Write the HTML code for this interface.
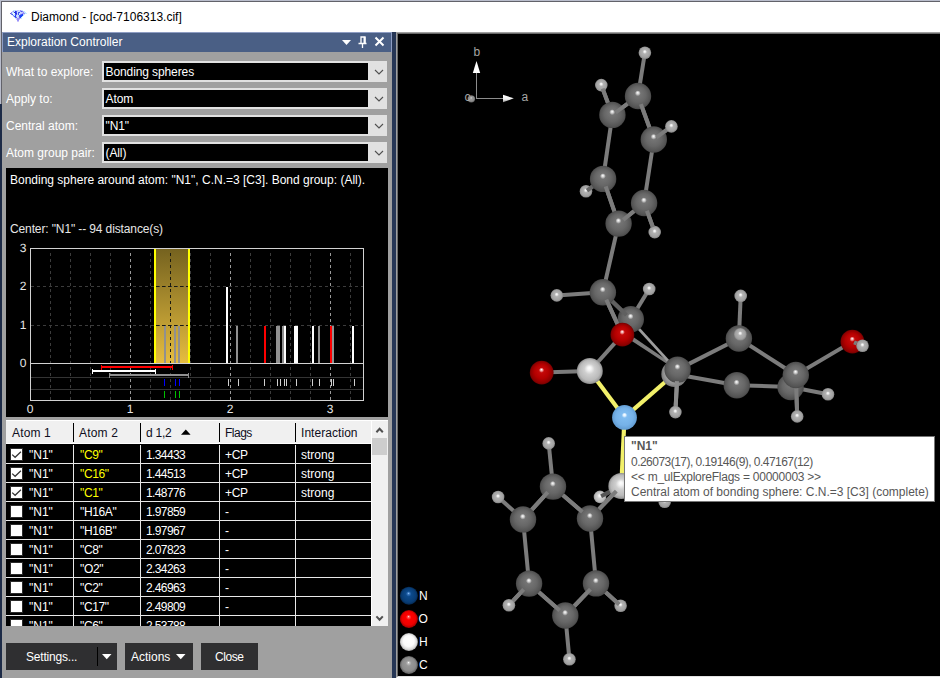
<!DOCTYPE html>
<html lang="en"><head><meta charset="utf-8"><title>Diamond - [cod-7106313.cif]</title>
<style>
*{box-sizing:border-box}
html,body{margin:0;padding:0}
body{width:940px;height:678px;position:relative;overflow:hidden;background:#fff;font-family:"Liberation Sans",sans-serif;font-size:12px;line-height:14px;color:#fff}
.a{position:absolute}
.t{position:absolute;white-space:pre;line-height:14px;height:14px}
.lbl{color:#fff}
.combo{position:absolute;left:102px;width:285px;height:21px;background:#e1e1e1}
.combo .in{position:absolute;left:2px;top:2px;width:264px;height:17px;background:#000}
.combo .tx{position:absolute;left:3.5px;top:4px;white-space:pre;color:#fff}
.combo svg{position:absolute;left:272px;top:8px}
.btn{position:absolute;top:643px;height:27px;background:#2f2f31;color:#fff}
.hd{position:absolute;top:426px;color:#0e0e20;white-space:pre}
.sep{position:absolute;top:423px;width:1px;height:19px;background:#000}
.row{position:absolute;left:6px;width:365px;height:19px}
.row span{position:absolute;top:3px;white-space:pre;color:#fff}
.row .y{color:#ffff00}
.cb{position:absolute;left:4px;top:3px;width:13px;height:13px;background:#fff;border:1px solid #2b2b2b}
.tip{position:absolute;left:624px;top:436px;width:311px;height:66px;background:#fff;border:1px solid #767676;color:#575757}
.tip div{position:absolute;left:6px;white-space:pre;line-height:14px}
</style></head>
<body>
<div class="a" style="left:0;top:0;width:940px;height:1px;background:#b9bdcc"></div>
<div class="a" style="left:1px;top:1px;width:939px;height:1px;background:#62626a"></div>
<div class="a" style="left:0;top:0;width:1px;height:104px;background:#b9bdcc"></div>
<div class="a" style="left:1px;top:1px;width:1px;height:103px;background:#62626a"></div>
<div class="a" style="left:0;top:104px;width:2px;height:574px;background:#1d2b47"></div>
<svg class="a" style="left:10px;top:10px" width="17" height="12" viewBox="0 0 17 12" shape-rendering="crispEdges"><rect x="3" y="0" width="2" height="1" fill="#c4ecff"/><rect x="5" y="0" width="1" height="1" fill="#cbc4ff"/><rect x="6" y="0" width="1" height="1" fill="#c4ecff"/><rect x="7" y="0" width="2" height="1" fill="#cbc4ff"/><rect x="9" y="0" width="1" height="1" fill="#c4ecff"/><rect x="10" y="0" width="1" height="1" fill="#9890f8"/><rect x="11" y="0" width="1" height="1" fill="#cbc4ff"/><rect x="12" y="0" width="1" height="1" fill="#c4ecff"/><rect x="2" y="1" width="1" height="1" fill="#cbc4ff"/><rect x="3" y="1" width="1" height="1" fill="#9890f8"/><rect x="4" y="1" width="1" height="1" fill="#c4ecff"/><rect x="5" y="1" width="1" height="1" fill="#2430e0"/><rect x="6" y="1" width="1" height="1" fill="#4858f0"/><rect x="7" y="1" width="1" height="1" fill="#cbc4ff"/><rect x="8" y="1" width="1" height="1" fill="#c4ecff"/><rect x="9" y="1" width="1" height="1" fill="#cbc4ff"/><rect x="10" y="1" width="1" height="1" fill="#9890f8"/><rect x="11" y="1" width="1" height="1" fill="#4858f0"/><rect x="12" y="1" width="1" height="1" fill="#7888f0"/><rect x="13" y="1" width="1" height="1" fill="#cbc4ff"/><rect x="14" y="1" width="1" height="1" fill="#c4ecff"/><rect x="1" y="2" width="1" height="1" fill="#9890f8"/><rect x="2" y="2" width="2" height="1" fill="#c4ecff"/><rect x="4" y="2" width="2" height="1" fill="#2430e0"/><rect x="6" y="2" width="1" height="1" fill="#4858f0"/><rect x="7" y="2" width="1" height="1" fill="#c4ecff"/><rect x="8" y="2" width="2" height="1" fill="#4858f0"/><rect x="10" y="2" width="1" height="1" fill="#c4ecff"/><rect x="11" y="2" width="2" height="1" fill="#cbc4ff"/><rect x="13" y="2" width="1" height="1" fill="#9890f8"/><rect x="14" y="2" width="2" height="1" fill="#c4ecff"/><rect x="0" y="3" width="1" height="1" fill="#7464d4"/><rect x="1" y="3" width="1" height="1" fill="#7888f0"/><rect x="2" y="3" width="1" height="1" fill="#c4ecff"/><rect x="3" y="3" width="2" height="1" fill="#f4fbff"/><rect x="5" y="3" width="2" height="1" fill="#2430e0"/><rect x="7" y="3" width="1" height="1" fill="#cbc4ff"/><rect x="8" y="3" width="1" height="1" fill="#4858f0"/><rect x="9" y="3" width="1" height="1" fill="#c4ecff"/><rect x="10" y="3" width="2" height="1" fill="#cbc4ff"/><rect x="12" y="3" width="3" height="1" fill="#9890f8"/><rect x="15" y="3" width="2" height="1" fill="#c4ecff"/><rect x="1" y="4" width="1" height="1" fill="#7888f0"/><rect x="2" y="4" width="1" height="1" fill="#4858f0"/><rect x="3" y="4" width="1" height="1" fill="#f4fbff"/><rect x="4" y="4" width="1" height="1" fill="#c4ecff"/><rect x="5" y="4" width="2" height="1" fill="#4858f0"/><rect x="7" y="4" width="1" height="1" fill="#cbc4ff"/><rect x="8" y="4" width="1" height="1" fill="#4858f0"/><rect x="9" y="4" width="1" height="1" fill="#c4ecff"/><rect x="10" y="4" width="1" height="1" fill="#7888f0"/><rect x="11" y="4" width="1" height="1" fill="#4858f0"/><rect x="12" y="4" width="1" height="1" fill="#1c44f8"/><rect x="13" y="4" width="1" height="1" fill="#cbc4ff"/><rect x="14" y="4" width="1" height="1" fill="#c4ecff"/><rect x="2" y="5" width="1" height="1" fill="#c4ecff"/><rect x="3" y="5" width="1" height="1" fill="#7888f0"/><rect x="4" y="5" width="1" height="1" fill="#c4ecff"/><rect x="5" y="5" width="1" height="1" fill="#1c44f8"/><rect x="6" y="5" width="1" height="1" fill="#cbc4ff"/><rect x="7" y="5" width="2" height="1" fill="#c4ecff"/><rect x="9" y="5" width="1" height="1" fill="#4858f0"/><rect x="10" y="5" width="3" height="1" fill="#1c44f8"/><rect x="13" y="5" width="1" height="1" fill="#c4ecff"/><rect x="3" y="6" width="1" height="1" fill="#cbc4ff"/><rect x="4" y="6" width="1" height="1" fill="#4858f0"/><rect x="5" y="6" width="1" height="1" fill="#1c44f8"/><rect x="6" y="6" width="1" height="1" fill="#cbc4ff"/><rect x="7" y="6" width="1" height="1" fill="#c4ecff"/><rect x="8" y="6" width="1" height="1" fill="#cbc4ff"/><rect x="9" y="6" width="1" height="1" fill="#4858f0"/><rect x="10" y="6" width="2" height="1" fill="#1c44f8"/><rect x="12" y="6" width="1" height="1" fill="#c4ecff"/><rect x="4" y="7" width="1" height="1" fill="#c4ecff"/><rect x="5" y="7" width="1" height="1" fill="#4858f0"/><rect x="6" y="7" width="1" height="1" fill="#7464d4"/><rect x="7" y="7" width="1" height="1" fill="#c4ecff"/><rect x="8" y="7" width="1" height="1" fill="#cbc4ff"/><rect x="9" y="7" width="1" height="1" fill="#7464d4"/><rect x="10" y="7" width="1" height="1" fill="#1c44f8"/><rect x="11" y="7" width="1" height="1" fill="#c4ecff"/><rect x="5" y="8" width="1" height="1" fill="#c4ecff"/><rect x="6" y="8" width="1" height="1" fill="#cbc4ff"/><rect x="7" y="8" width="3" height="1" fill="#9890f8"/><rect x="10" y="8" width="1" height="1" fill="#cbc4ff"/><rect x="11" y="8" width="1" height="1" fill="#c4ecff"/><rect x="6" y="9" width="1" height="1" fill="#cbc4ff"/><rect x="7" y="9" width="2" height="1" fill="#9890f8"/><rect x="9" y="9" width="1" height="1" fill="#cbc4ff"/><rect x="7" y="10" width="2" height="1" fill="#9890f8"/><rect x="7" y="11" width="2" height="1" fill="#cbc4ff"/></svg>
<div class="t" style="left:31px;top:10px;color:#000">Diamond - [cod-7106313.cif]</div>
<div class="a" style="left:2px;top:52px;width:390px;height:626px;background:#a0a0a0"></div>
<div class="a" style="left:2px;top:32px;width:390px;height:20px;background:#4a5f85;border-top:1px solid #8e9dc3;border-left:1px solid #8e9dc3;border-right:1px solid #8e9dc3"></div>
<div class="t" style="left:7px;top:35px">Exploration Controller</div>
<svg class="a" style="left:340px;top:34px" width="50" height="16" viewBox="0 0 50 16">
<polygon points="2,6 11,6 6.5,11" fill="#fff"/>
<path d="M21 9.5V3h4v6.5 M18.5 9.5h8 M22.5 10v4" fill="none" stroke="#fff" stroke-width="1.3"/><path d="M24.5 3v6.5" stroke="#fff" stroke-width="2" fill="none"/>
<path d="M35.5 3.5l8 8 M43.5 3.5l-8 8" stroke="#fff" stroke-width="2" fill="none"/>
</svg>
<div class="a" style="left:392px;top:32px;width:4px;height:646px;background:#263655"></div>
<div class="a" style="left:396px;top:32px;width:544px;height:646px;background:#000;border-left:1px solid #a0a0a0;border-top:1px solid #a0a0a0;border-bottom:1px solid #fff"></div>
<div class="a" style="left:397px;top:33px;width:543px;height:644px;border-left:1px solid #696969;border-top:1px solid #696969;border-bottom:1px solid #e3e3e3"></div>
<div class="t lbl" style="left:6px;top:65px">What to explore:</div>
<div class="combo" style="top:61px"><div class="in"></div><div class="tx" style="letter-spacing:-0.1px">Bonding spheres</div><svg width="10" height="6" viewBox="0 0 10 6"><path d="M1 1l4 4 4-4" fill="none" stroke="#505050" stroke-width="1.1"/></svg></div>
<div class="t lbl" style="left:6px;top:92px">Apply to:</div>
<div class="combo" style="top:88px"><div class="in"></div><div class="tx" style="letter-spacing:-0.1px">Atom</div><svg width="10" height="6" viewBox="0 0 10 6"><path d="M1 1l4 4 4-4" fill="none" stroke="#505050" stroke-width="1.1"/></svg></div>
<div class="t lbl" style="left:6px;top:119px">Central atom:</div>
<div class="combo" style="top:115px"><div class="in"></div><div class="tx" style="letter-spacing:-0.1px">"N1"</div><svg width="10" height="6" viewBox="0 0 10 6"><path d="M1 1l4 4 4-4" fill="none" stroke="#505050" stroke-width="1.1"/></svg></div>
<div class="t lbl" style="left:6px;top:146px">Atom group pair:</div>
<div class="combo" style="top:142px"><div class="in"></div><div class="tx" style="letter-spacing:-0.1px">(All)</div><svg width="10" height="6" viewBox="0 0 10 6"><path d="M1 1l4 4 4-4" fill="none" stroke="#505050" stroke-width="1.1"/></svg></div>
<div class="a" style="left:6px;top:168px;width:382px;height:249px;background:#000"></div>
<div class="t" style="left:10px;top:173px">Bonding sphere around atom: "N1", C.N.=3 [C3]. Bond group: (All).</div>
<div class="t" style="left:10px;top:222px;color:#e6e6e6;letter-spacing:-0.12px">Center: "N1" -- 94 distance(s)</div>
<svg class="a" style="left:6px;top:168px" width="382" height="249" viewBox="6 168 382 249" shape-rendering="crispEdges">
<defs><linearGradient id="gold" x1="0" y1="0" x2="0" y2="1"><stop offset="0" stop-color="#75621f"/><stop offset="1" stop-color="#e6bd3f"/></linearGradient></defs>
<rect x="154" y="249" width="36" height="114" fill="url(#gold)"/>
<line x1="50.5" y1="253" x2="50.5" y2="400" stroke="#3c3c3c" stroke-width="1" stroke-dasharray="3 3"/>
<line x1="70.5" y1="253" x2="70.5" y2="400" stroke="#3c3c3c" stroke-width="1" stroke-dasharray="3 3"/>
<line x1="90.5" y1="253" x2="90.5" y2="400" stroke="#3c3c3c" stroke-width="1" stroke-dasharray="3 3"/>
<line x1="110.5" y1="253" x2="110.5" y2="400" stroke="#3c3c3c" stroke-width="1" stroke-dasharray="3 3"/>
<line x1="130.5" y1="253" x2="130.5" y2="400" stroke="#9a9a9a" stroke-width="1" stroke-dasharray="3 3"/>
<line x1="150.5" y1="253" x2="150.5" y2="400" stroke="#3c3c3c" stroke-width="1" stroke-dasharray="3 3"/>
<line x1="170.5" y1="253" x2="170.5" y2="400" stroke="#3c3c3c" stroke-width="1" stroke-dasharray="3 3"/>
<line x1="190.5" y1="253" x2="190.5" y2="400" stroke="#3c3c3c" stroke-width="1" stroke-dasharray="3 3"/>
<line x1="210.5" y1="253" x2="210.5" y2="400" stroke="#3c3c3c" stroke-width="1" stroke-dasharray="3 3"/>
<line x1="230.5" y1="253" x2="230.5" y2="400" stroke="#9a9a9a" stroke-width="1" stroke-dasharray="3 3"/>
<line x1="250.5" y1="253" x2="250.5" y2="400" stroke="#3c3c3c" stroke-width="1" stroke-dasharray="3 3"/>
<line x1="270.5" y1="253" x2="270.5" y2="400" stroke="#3c3c3c" stroke-width="1" stroke-dasharray="3 3"/>
<line x1="290.5" y1="253" x2="290.5" y2="400" stroke="#3c3c3c" stroke-width="1" stroke-dasharray="3 3"/>
<line x1="310.5" y1="253" x2="310.5" y2="400" stroke="#3c3c3c" stroke-width="1" stroke-dasharray="3 3"/>
<line x1="330.5" y1="253" x2="330.5" y2="400" stroke="#9a9a9a" stroke-width="1" stroke-dasharray="3 3"/>
<line x1="350.5" y1="253" x2="350.5" y2="400" stroke="#3c3c3c" stroke-width="1" stroke-dasharray="3 3"/>
<line x1="170.5" y1="253" x2="170.5" y2="363" stroke="#1a1a10" stroke-width="1" stroke-dasharray="3 3"/>
<line x1="31" y1="286.5" x2="363" y2="286.5" stroke="#3c3c3c" stroke-width="1" stroke-dasharray="3 3"/>
<line x1="156" y1="286.5" x2="188" y2="286.5" stroke="#1a1a10" stroke-width="1" stroke-dasharray="3 3"/>
<line x1="31" y1="325.5" x2="363" y2="325.5" stroke="#3c3c3c" stroke-width="1" stroke-dasharray="3 3"/>
<line x1="156" y1="325.5" x2="188" y2="325.5" stroke="#1a1a10" stroke-width="1" stroke-dasharray="3 3"/>
<rect x="154" y="249" width="2" height="114" fill="#ffff00"/><rect x="188" y="249" width="2" height="114" fill="#ffff00"/>
<rect x="164" y="326" width="2" height="37" fill="#909090"/>
<rect x="174" y="326" width="2" height="37" fill="#909090"/>
<rect x="178" y="326" width="2" height="37" fill="#909090"/>
<rect x="226" y="287" width="2" height="76" fill="#fff"/>
<rect x="236" y="326" width="2" height="37" fill="#909090"/>
<rect x="264" y="326" width="2" height="37" fill="#ff0000"/>
<rect x="276" y="326" width="4" height="37" fill="#909090"/>
<rect x="282" y="326" width="2" height="37" fill="#909090"/>
<rect x="284" y="326" width="2" height="37" fill="#fff"/>
<rect x="294" y="326" width="4" height="37" fill="#fff"/>
<rect x="312" y="326" width="2" height="37" fill="#fff"/>
<rect x="318" y="326" width="2" height="37" fill="#909090"/>
<rect x="330" y="326" width="2" height="37" fill="#ff0000"/>
<rect x="332" y="326" width="2" height="37" fill="#909090"/>
<rect x="352" y="326" width="2" height="37" fill="#fff"/>
<rect x="31" y="377" width="332" height="1" fill="#343434"/><rect x="31" y="389" width="332" height="1" fill="#343434"/>
<rect x="30.5" y="248.5" width="333" height="152" fill="none" stroke="#d2d2d2" stroke-width="1"/>
<rect x="30" y="363" width="334" height="1" fill="#d2d2d2"/>
<rect x="101" y="366" width="72" height="2" fill="#ff0000"/><rect x="101" y="365" width="1" height="5" fill="#ff0000"/><rect x="172" y="365" width="1" height="5" fill="#ff0000"/>
<rect x="92" y="370" width="64" height="2" fill="#fff"/><rect x="92" y="369" width="1" height="5" fill="#fff"/><rect x="155" y="369" width="1" height="5" fill="#fff"/>
<rect x="109" y="374" width="80" height="2" fill="#909090"/><rect x="109" y="373" width="1" height="5" fill="#909090"/><rect x="188" y="373" width="1" height="5" fill="#909090"/>
<rect x="164" y="379" width="1" height="7" fill="#0000ff"/>
<rect x="164" y="391" width="1" height="7" fill="#00c000"/>
<rect x="175" y="379" width="1" height="7" fill="#0000ff"/>
<rect x="175" y="391" width="1" height="7" fill="#00c000"/>
<rect x="179" y="379" width="1" height="7" fill="#0000ff"/>
<rect x="179" y="391" width="1" height="7" fill="#00c000"/>
<rect x="228" y="379" width="1" height="7" fill="#d0d0d0"/>
<rect x="238" y="379" width="1" height="7" fill="#d0d0d0"/>
<rect x="264" y="379" width="1" height="7" fill="#d0d0d0"/>
<rect x="277" y="379" width="1" height="7" fill="#d0d0d0"/>
<rect x="280" y="379" width="1" height="7" fill="#d0d0d0"/>
<rect x="284" y="379" width="1" height="7" fill="#d0d0d0"/>
<rect x="286" y="379" width="1" height="7" fill="#d0d0d0"/>
<rect x="296" y="379" width="1" height="7" fill="#d0d0d0"/>
<rect x="312" y="379" width="1" height="7" fill="#d0d0d0"/>
<rect x="319" y="379" width="1" height="7" fill="#d0d0d0"/>
<rect x="331" y="379" width="1" height="7" fill="#d0d0d0"/>
<rect x="333" y="379" width="1" height="7" fill="#d0d0d0"/>
<rect x="354" y="379" width="1" height="7" fill="#d0d0d0"/>
<g fill="#e6e6e6" font-family="Liberation Sans, sans-serif" font-size="12" text-anchor="middle" style="text-rendering:geometricPrecision">
<text x="23" y="251.8">3</text>
<text x="23" y="289.8">2</text>
<text x="23" y="328.8">1</text>
<text x="23" y="366.8">0</text>
<text x="30" y="413">0</text>
<text x="130" y="413">1</text>
<text x="230" y="413">2</text>
<text x="330" y="413">3</text>
</g></svg>
<div class="a" style="left:6px;top:420px;width:382px;height:206px;background:#000"></div>
<div class="a" style="left:6px;top:420px;width:366px;height:24px;background:#f0f0f0;border-top:1px solid #fff;border-right:1px solid #fff;border-bottom:1px solid #fff"></div>
<div class="a" style="left:371px;top:420px;width:17px;height:206px;background:#f0f0f0;border-left:1px solid #fff;border-top:1px solid #fff"></div>
<div class="a" style="left:372px;top:438px;width:15px;height:17px;background:#cdcdcd"></div>
<svg class="a" style="left:375px;top:426px" width="10" height="8" viewBox="0 0 10 8"><path d="M1.4 6.2l3.2-3.4 3.2 3.4" fill="none" stroke="#505050" stroke-width="2"/></svg>
<svg class="a" style="left:375px;top:614px" width="10" height="8" viewBox="0 0 10 8"><path d="M1.4 2.4l3.2 3.4 3.2-3.4" fill="none" stroke="#505050" stroke-width="2"/></svg>
<div class="hd" style="left:12px;letter-spacing:0.15px">Atom 1</div>
<div class="hd" style="left:79px;letter-spacing:0.2px">Atom 2</div>
<div class="hd" style="left:146px;letter-spacing:-0.25px">d 1,2</div>
<div class="hd" style="left:225px;letter-spacing:-0.5px">Flags</div>
<div class="hd" style="left:301px;letter-spacing:0.05px">Interaction</div>
<div class="sep" style="left:73px"></div>
<div class="sep" style="left:140px"></div>
<div class="sep" style="left:219px"></div>
<div class="sep" style="left:295px"></div>
<svg class="a" style="left:181px;top:429px" width="10" height="6" viewBox="0 0 10 6"><polygon points="0,5.8 9.6,5.8 4.8,0.4" fill="#000"/></svg>
<div class="a" style="left:6px;top:445px;width:365px;height:181px;overflow:hidden">
<div class="row" style="left:0;top:0px;border-bottom:1px solid #e8e8e8"><div class="cb"><svg style="position:absolute;left:0;top:0" width="11" height="11" viewBox="0 0 11 11"><path d="M1.2 5.6l2.9 2.7 5.8-5.6" fill="none" stroke="#333" stroke-width="1.2"/></svg></div><span style="left:23px">"N1"</span><span class="y" style="left:74px;letter-spacing:-0.35px">"C9"</span><span style="left:140px;letter-spacing:-0.62px">1.34433</span><span style="left:219px;letter-spacing:-0.3px">+CP</span><span style="left:295px">strong</span></div>
<div class="row" style="left:0;top:19px;border-bottom:1px solid #e8e8e8"><div class="cb"><svg style="position:absolute;left:0;top:0" width="11" height="11" viewBox="0 0 11 11"><path d="M1.2 5.6l2.9 2.7 5.8-5.6" fill="none" stroke="#333" stroke-width="1.2"/></svg></div><span style="left:23px">"N1"</span><span class="y" style="left:74px;letter-spacing:-0.35px">"C16"</span><span style="left:140px;letter-spacing:-0.62px">1.44513</span><span style="left:219px;letter-spacing:-0.3px">+CP</span><span style="left:295px">strong</span></div>
<div class="row" style="left:0;top:38px;border-bottom:1px solid #e8e8e8"><div class="cb"><svg style="position:absolute;left:0;top:0" width="11" height="11" viewBox="0 0 11 11"><path d="M1.2 5.6l2.9 2.7 5.8-5.6" fill="none" stroke="#333" stroke-width="1.2"/></svg></div><span style="left:23px">"N1"</span><span class="y" style="left:74px;letter-spacing:-0.35px">"C1"</span><span style="left:140px;letter-spacing:-0.62px">1.48776</span><span style="left:219px;letter-spacing:-0.3px">+CP</span><span style="left:295px">strong</span></div>
<div class="row" style="left:0;top:57px;border-bottom:1px solid #e8e8e8"><div class="cb"></div><span style="left:23px">"N1"</span><span style="left:74px;letter-spacing:-0.35px">"H16A"</span><span style="left:140px;letter-spacing:-0.62px">1.97859</span><span style="left:219px;letter-spacing:-0.3px">-</span><span style="left:295px"></span></div>
<div class="row" style="left:0;top:76px;border-bottom:1px solid #e8e8e8"><div class="cb"></div><span style="left:23px">"N1"</span><span style="left:74px;letter-spacing:-0.35px">"H16B"</span><span style="left:140px;letter-spacing:-0.62px">1.97967</span><span style="left:219px;letter-spacing:-0.3px">-</span><span style="left:295px"></span></div>
<div class="row" style="left:0;top:95px;border-bottom:1px solid #e8e8e8"><div class="cb"></div><span style="left:23px">"N1"</span><span style="left:74px;letter-spacing:-0.35px">"C8"</span><span style="left:140px;letter-spacing:-0.62px">2.07823</span><span style="left:219px;letter-spacing:-0.3px">-</span><span style="left:295px"></span></div>
<div class="row" style="left:0;top:114px;border-bottom:1px solid #e8e8e8"><div class="cb"></div><span style="left:23px">"N1"</span><span style="left:74px;letter-spacing:-0.35px">"O2"</span><span style="left:140px;letter-spacing:-0.62px">2.34263</span><span style="left:219px;letter-spacing:-0.3px">-</span><span style="left:295px"></span></div>
<div class="row" style="left:0;top:133px;border-bottom:1px solid #e8e8e8"><div class="cb"></div><span style="left:23px">"N1"</span><span style="left:74px;letter-spacing:-0.35px">"C2"</span><span style="left:140px;letter-spacing:-0.62px">2.46963</span><span style="left:219px;letter-spacing:-0.3px">-</span><span style="left:295px"></span></div>
<div class="row" style="left:0;top:152px;border-bottom:1px solid #e8e8e8"><div class="cb"></div><span style="left:23px">"N1"</span><span style="left:74px;letter-spacing:-0.35px">"C17"</span><span style="left:140px;letter-spacing:-0.62px">2.49809</span><span style="left:219px;letter-spacing:-0.3px">-</span><span style="left:295px"></span></div>
<div class="row" style="left:0;top:171px;border-bottom:1px solid #e8e8e8"><div class="cb"></div><span style="left:23px">"N1"</span><span style="left:74px;letter-spacing:-0.35px">"C6"</span><span style="left:140px;letter-spacing:-0.62px">2.53788</span><span style="left:219px;letter-spacing:-0.3px"></span><span style="left:295px"></span></div>
<div class="a" style="left:67px;top:0;width:1px;height:182px;background:#e8e8e8"></div>
<div class="a" style="left:134px;top:0;width:1px;height:182px;background:#e8e8e8"></div>
<div class="a" style="left:213px;top:0;width:1px;height:182px;background:#e8e8e8"></div>
<div class="a" style="left:289px;top:0;width:1px;height:182px;background:#e8e8e8"></div>
</div>
<div class="btn" style="left:6px;width:111px"><div class="t" style="left:20px;top:7px;letter-spacing:-0.2px">Settings...</div><div class="a" style="left:91px;top:4px;width:1px;height:19px;background:#000"></div><svg class="a" style="left:96px;top:11px" width="10" height="6" viewBox="0 0 10 6"><polygon points="0,0 9.5,0 4.75,5.2" fill="#fff"/></svg></div>
<div class="btn" style="left:125px;width:68px"><div class="t" style="left:6px;top:7px">Actions</div><svg class="a" style="left:51px;top:11px" width="10" height="6" viewBox="0 0 10 6"><polygon points="0,0 9.5,0 4.75,5.2" fill="#fff"/></svg></div>
<div class="btn" style="left:201px;width:57px"><div class="t" style="left:14px;top:7px;letter-spacing:-0.45px">Close</div></div>
<svg class="a" style="left:398px;top:34px" width="542" height="642" viewBox="398 34 542 642">
<defs>
<linearGradient id="cone" x1="0" y1="0" x2="0" y2="1"><stop offset="0" stop-color="#fff"/><stop offset="0.6" stop-color="#f0f0f0"/><stop offset="1" stop-color="#909090"/></linearGradient>
<radialGradient id="gC" cx="0.5" cy="0.5" r="0.5" fx="0.49" fy="0.37"><stop offset="0" stop-color="#fff"/><stop offset="0.1" stop-color="#d0d0d0"/><stop offset="0.22" stop-color="#747474"/><stop offset="0.6" stop-color="#676767"/><stop offset="0.9" stop-color="#545454"/><stop offset="1" stop-color="#484848"/></radialGradient>
<radialGradient id="gH" cx="0.5" cy="0.5" r="0.5" fx="0.49" fy="0.4"><stop offset="0" stop-color="#fff"/><stop offset="0.14" stop-color="#ececec"/><stop offset="0.34" stop-color="#b2b2b2"/><stop offset="0.78" stop-color="#a2a2a2"/><stop offset="1" stop-color="#868686"/></radialGradient>
<radialGradient id="gO" cx="0.5" cy="0.5" r="0.5" fx="0.49" fy="0.37"><stop offset="0" stop-color="#fff"/><stop offset="0.1" stop-color="#f0a0a0"/><stop offset="0.22" stop-color="#c40808"/><stop offset="0.6" stop-color="#b40000"/><stop offset="0.9" stop-color="#8c0000"/><stop offset="1" stop-color="#700000"/></radialGradient>
<radialGradient id="gW" cx="0.5" cy="0.5" r="0.5" fx="0.48" fy="0.38"><stop offset="0" stop-color="#fff"/><stop offset="0.15" stop-color="#f4f4f4"/><stop offset="0.4" stop-color="#cfcfcf"/><stop offset="0.78" stop-color="#bababa"/><stop offset="0.92" stop-color="#a0a0a0"/><stop offset="1" stop-color="#888"/></radialGradient>
<radialGradient id="gV" cx="0.5" cy="0.5" r="0.5" fx="0.48" fy="0.38"><stop offset="0" stop-color="#fff"/><stop offset="0.4" stop-color="#c8c8c8"/><stop offset="0.6" stop-color="#a6a6a6"/><stop offset="0.85" stop-color="#8e8e8e"/><stop offset="1" stop-color="#787878"/></radialGradient>
<radialGradient id="gN" cx="0.5" cy="0.5" r="0.5" fx="0.5" fy="0.39"><stop offset="0" stop-color="#fff"/><stop offset="0.1" stop-color="#e0f1ff"/><stop offset="0.22" stop-color="#80bcf0"/><stop offset="0.7" stop-color="#76b2e8"/><stop offset="1" stop-color="#629cd2"/></radialGradient>
<radialGradient id="lN" cx="0.5" cy="0.5" r="0.5" fx="0.48" fy="0.36"><stop offset="0" stop-color="#9ad0ff"/><stop offset="0.12" stop-color="#3a78c0"/><stop offset="0.3" stop-color="#0c4a8c"/><stop offset="0.8" stop-color="#083c74"/><stop offset="1" stop-color="#042850"/></radialGradient>
<radialGradient id="lO" cx="0.5" cy="0.5" r="0.5" fx="0.48" fy="0.36"><stop offset="0" stop-color="#ffd0d0"/><stop offset="0.12" stop-color="#ff5050"/><stop offset="0.3" stop-color="#ff0000"/><stop offset="0.75" stop-color="#f00000"/><stop offset="1" stop-color="#a00000"/></radialGradient>
<radialGradient id="lH" cx="0.5" cy="0.5" r="0.5" fx="0.48" fy="0.36"><stop offset="0" stop-color="#fff"/><stop offset="0.6" stop-color="#fbfbfb"/><stop offset="0.85" stop-color="#dcdcdc"/><stop offset="1" stop-color="#a8a8a8"/></radialGradient>
<radialGradient id="lC" cx="0.5" cy="0.5" r="0.5" fx="0.48" fy="0.36"><stop offset="0" stop-color="#fff"/><stop offset="0.12" stop-color="#c0c0c0"/><stop offset="0.3" stop-color="#989898"/><stop offset="0.75" stop-color="#8c8c8c"/><stop offset="1" stop-color="#606060"/></radialGradient>
</defs>
<g stroke="#8c8c8c" stroke-width="1" fill="#fff"><line x1="476.5" y1="73" x2="476.5" y2="98.5"/><line x1="476" y1="98.5" x2="503" y2="98.5"/><polygon points="476.5,61 480.2,73 472.8,73" stroke="none"/><polygon points="513.8,98.3 503,94.8 503,102.2" stroke="none" fill="url(#cone)"/><ellipse cx="471.3" cy="98.8" rx="3.8" ry="3.6" fill="url(#lC)" stroke="none"/></g>
<g fill="#a6a6a6" font-family="Liberation Sans, sans-serif" font-size="12"><text x="473.5" y="56">b</text><text x="521.5" y="101">a</text><text x="464.5" y="101">c</text></g>
<g stroke-linecap="butt">
<line x1="638.0" y1="96.0" x2="644.9" y2="52.7" stroke="#7c7c7c" stroke-width="4"/>
<line x1="638.0" y1="96.0" x2="612.4" y2="114.9" stroke="#7c7c7c" stroke-width="4"/>
<line x1="612.4" y1="114.9" x2="601.3" y2="85.1" stroke="#7c7c7c" stroke-width="4"/>
<line x1="638.0" y1="96.0" x2="653.8" y2="139.5" stroke="#7c7c7c" stroke-width="4"/>
<line x1="653.8" y1="139.5" x2="671.4" y2="126.4" stroke="#7c7c7c" stroke-width="4"/>
<line x1="612.4" y1="114.9" x2="603.1" y2="178.9" stroke="#7c7c7c" stroke-width="4"/>
<line x1="603.1" y1="178.9" x2="586.0" y2="191.3" stroke="#666" stroke-width="4"/>
<line x1="653.8" y1="139.5" x2="644.1" y2="203.0" stroke="#7c7c7c" stroke-width="4"/>
<line x1="603.1" y1="178.9" x2="618.6" y2="223.6" stroke="#7c7c7c" stroke-width="4"/>
<line x1="644.1" y1="203.0" x2="618.6" y2="223.6" stroke="#7c7c7c" stroke-width="4"/>
<line x1="644.1" y1="203.0" x2="654.7" y2="232.1" stroke="#7c7c7c" stroke-width="4"/>
<line x1="618.6" y1="223.6" x2="602.9" y2="292.3" stroke="#7c7c7c" stroke-width="4"/>
<line x1="602.9" y1="292.3" x2="556.8" y2="295.4" stroke="#7c7c7c" stroke-width="4"/>
<line x1="602.9" y1="292.3" x2="630.8" y2="319.2" stroke="#606060" stroke-width="4"/>
<line x1="630.8" y1="319.2" x2="649.2" y2="289.0" stroke="#7c7c7c" stroke-width="4"/>
<line x1="602.9" y1="292.3" x2="622.4" y2="334.7" stroke="#7c7c7c" stroke-width="4"/>
<line x1="622.4" y1="334.7" x2="589.8" y2="371.0" stroke="#7c7c7c" stroke-width="4"/>
<line x1="589.8" y1="371.0" x2="541.7" y2="372.6" stroke="#7c7c7c" stroke-width="4"/>
<line x1="677.6" y1="369.6" x2="675.4" y2="412.1" stroke="#8c8c8c" stroke-width="4"/>
<line x1="677.6" y1="369.6" x2="738.9" y2="338.5" stroke="#7c7c7c" stroke-width="4"/>
<line x1="674.3" y1="374.0" x2="736.8" y2="385.2" stroke="#7c7c7c" stroke-width="4"/>
<line x1="738.9" y1="338.5" x2="740.7" y2="295.9" stroke="#7c7c7c" stroke-width="4"/>
<line x1="738.9" y1="338.5" x2="795.8" y2="375.0" stroke="#7c7c7c" stroke-width="4"/>
<line x1="736.8" y1="385.2" x2="790.6" y2="387.0" stroke="#7c7c7c" stroke-width="4"/>
<line x1="795.8" y1="375.0" x2="852.4" y2="341.6" stroke="#7c7c7c" stroke-width="4"/>
<line x1="852.4" y1="341.6" x2="862.5" y2="345.8" stroke="#7c7c7c" stroke-width="4"/>
<line x1="795.8" y1="375.0" x2="797.2" y2="416.4" stroke="#7c7c7c" stroke-width="4"/>
<line x1="790.6" y1="387.0" x2="828.0" y2="394.3" stroke="#7c7c7c" stroke-width="4"/>
<line x1="553.0" y1="486.6" x2="548.7" y2="443.4" stroke="#7c7c7c" stroke-width="4"/>
<line x1="553.0" y1="486.6" x2="523.0" y2="519.4" stroke="#7c7c7c" stroke-width="4"/>
<line x1="553.0" y1="486.6" x2="590.0" y2="518.5" stroke="#7c7c7c" stroke-width="4"/>
<line x1="523.0" y1="519.4" x2="498.1" y2="497.0" stroke="#7c7c7c" stroke-width="4"/>
<line x1="590.0" y1="518.5" x2="621.3" y2="486.0" stroke="#7c7c7c" stroke-width="4"/>
<line x1="621.3" y1="486.0" x2="600.0" y2="496.9" stroke="#555" stroke-width="4"/>
<line x1="523.0" y1="519.4" x2="529.1" y2="583.6" stroke="#7c7c7c" stroke-width="4"/>
<line x1="590.0" y1="518.5" x2="596.0" y2="583.4" stroke="#7c7c7c" stroke-width="4"/>
<line x1="529.1" y1="583.6" x2="565.3" y2="615.5" stroke="#7c7c7c" stroke-width="4"/>
<line x1="596.0" y1="583.4" x2="565.3" y2="615.5" stroke="#7c7c7c" stroke-width="4"/>
<line x1="529.1" y1="583.6" x2="508.9" y2="605.3" stroke="#7c7c7c" stroke-width="4"/>
<line x1="596.0" y1="583.4" x2="620.6" y2="605.7" stroke="#7c7c7c" stroke-width="4"/>
<line x1="565.3" y1="615.5" x2="569.4" y2="659.3" stroke="#7c7c7c" stroke-width="4"/>
<polygon points="629.5,339.6 631.8,335.9 670.0,362.2 668.3,364.8" fill="#7c7c7c"/>
<line x1="638.5" y1="328.5" x2="670.5" y2="363.5" stroke="#9c9c9c" stroke-width="2.6"/>
<line x1="589.8" y1="371.0" x2="624.5" y2="417.4" stroke="#f2f06a" stroke-width="4.2"/>
<line x1="674.3" y1="374.0" x2="624.5" y2="417.4" stroke="#f2f06a" stroke-width="4.2"/>
<line x1="624.5" y1="417.4" x2="621.3" y2="486.0" stroke="#f2f06a" stroke-width="4.2"/>
</g>
<circle cx="644.9" cy="52.7" r="6.3" fill="url(#gH)"/>
<circle cx="638" cy="96" r="13.2" fill="url(#gC)"/>
<circle cx="601.3" cy="85.1" r="6.3" fill="url(#gH)"/>
<circle cx="612.4" cy="114.9" r="13.2" fill="url(#gC)"/>
<circle cx="671.4" cy="126.4" r="6.3" fill="url(#gH)"/>
<circle cx="653.8" cy="139.5" r="13.2" fill="url(#gC)"/>
<circle cx="603.1" cy="178.9" r="13.2" fill="url(#gC)"/>
<circle cx="586" cy="191.3" r="6.3" fill="url(#gH)"/>
<circle cx="644.1" cy="203" r="13.2" fill="url(#gC)"/>
<circle cx="618.6" cy="223.6" r="13.2" fill="url(#gC)"/>
<circle cx="654.7" cy="232.1" r="6.3" fill="url(#gH)"/>
<circle cx="602.9" cy="292.3" r="13.2" fill="url(#gC)"/>
<circle cx="556.8" cy="295.4" r="6.3" fill="url(#gH)"/>
<circle cx="649.2" cy="289.0" r="6.3" fill="url(#gH)"/>
<circle cx="630.8" cy="319.2" r="13.2" fill="url(#gC)"/>
<circle cx="622.4" cy="334.7" r="11.9" fill="url(#gO)"/>
<circle cx="589.8" cy="371" r="13" fill="url(#gW)"/>
<circle cx="541.7" cy="372.6" r="11.9" fill="url(#gO)"/>
<circle cx="674.3" cy="374.0" r="13" fill="url(#gV)"/>
<circle cx="677.6" cy="369.6" r="13.2" fill="url(#gC)"/>
<circle cx="624.5" cy="417.4" r="12.4" fill="url(#gN)"/>
<circle cx="675.4" cy="412.1" r="6.3" fill="url(#gH)"/>
<circle cx="738.9" cy="338.5" r="13.2" fill="url(#gC)"/>
<circle cx="740.7" cy="295.9" r="6.3" fill="url(#gH)"/>
<circle cx="736.8" cy="385.2" r="13.2" fill="url(#gC)"/>
<circle cx="790.6" cy="387.0" r="13.2" fill="url(#gC)"/>
<circle cx="852.4" cy="341.6" r="11.9" fill="url(#gO)"/>
<circle cx="828" cy="394.3" r="6.3" fill="url(#gH)"/>
<circle cx="797.2" cy="416.4" r="6.3" fill="url(#gH)"/>
<circle cx="621.3" cy="486" r="13" fill="url(#gW)"/>
<circle cx="600.0" cy="496.9" r="6.3" fill="url(#gW)"/>
<circle cx="664.7" cy="501.8" r="6.3" fill="url(#gH)"/>
<circle cx="548.7" cy="443.4" r="6.3" fill="url(#gH)"/>
<circle cx="553" cy="486.6" r="13.2" fill="url(#gC)"/>
<circle cx="498.1" cy="497" r="6.3" fill="url(#gH)"/>
<circle cx="523" cy="519.4" r="13.2" fill="url(#gC)"/>
<circle cx="590" cy="518.5" r="13.2" fill="url(#gC)"/>
<circle cx="529.1" cy="583.6" r="13.2" fill="url(#gC)"/>
<circle cx="596" cy="583.4" r="13.2" fill="url(#gC)"/>
<circle cx="565.3" cy="615.5" r="13.2" fill="url(#gC)"/>
<circle cx="508.9" cy="605.3" r="6.3" fill="url(#gH)"/>
<circle cx="620.6" cy="605.7" r="6.3" fill="url(#gH)"/>
<circle cx="569.4" cy="659.3" r="6.3" fill="url(#gH)"/>
<g stroke-linecap="butt">
<line x1="627.4" y1="103.8" x2="615.6" y2="112.5" stroke="#7c7c7c" stroke-width="4"/>
<line x1="607.8" y1="102.5" x2="602.6" y2="88.6" stroke="#7c7c7c" stroke-width="4"/>
<line x1="640.9" y1="104.1" x2="649.3" y2="127.1" stroke="#7c7c7c" stroke-width="4"/>
<line x1="656.4" y1="137.5" x2="666.3" y2="130.2" stroke="#7c7c7c" stroke-width="4"/>
<line x1="592.4" y1="186.6" x2="587.0" y2="190.6" stroke="#666" stroke-width="4"/>
<line x1="605.7" y1="186.4" x2="614.3" y2="211.1" stroke="#7c7c7c" stroke-width="4"/>
<line x1="633.8" y1="211.3" x2="623.2" y2="219.9" stroke="#7c7c7c" stroke-width="4"/>
<line x1="646.9" y1="210.8" x2="652.9" y2="227.1" stroke="#7c7c7c" stroke-width="4"/>
<line x1="612.4" y1="301.5" x2="626.5" y2="315.1" stroke="#606060" stroke-width="4"/>
<line x1="606.3" y1="299.7" x2="617.4" y2="323.9" stroke="#7c7c7c" stroke-width="4"/>
<line x1="677.0" y1="381.2" x2="675.7" y2="405.8" stroke="#8c8c8c" stroke-width="4"/>
<line x1="854.0" y1="342.3" x2="856.7" y2="343.4" stroke="#7c7c7c" stroke-width="4"/>
<line x1="796.2" y1="386.9" x2="797.0" y2="410.1" stroke="#7c7c7c" stroke-width="4"/>
<line x1="547.8" y1="492.2" x2="531.9" y2="509.7" stroke="#7c7c7c" stroke-width="4"/>
<line x1="563.0" y1="495.2" x2="582.4" y2="511.9" stroke="#7c7c7c" stroke-width="4"/>
<line x1="599.2" y1="509.0" x2="616.3" y2="491.1" stroke="#7c7c7c" stroke-width="4"/>
<line x1="609.7" y1="491.9" x2="601.1" y2="496.3" stroke="#555" stroke-width="4"/>
<line x1="539.0" y1="592.3" x2="559.7" y2="610.5" stroke="#7c7c7c" stroke-width="4"/>
<line x1="590.5" y1="589.1" x2="574.4" y2="606.0" stroke="#7c7c7c" stroke-width="4"/>
<line x1="523.7" y1="589.4" x2="513.2" y2="600.7" stroke="#7c7c7c" stroke-width="4"/>
<line x1="605.8" y1="592.3" x2="619.2" y2="604.4" stroke="#7c7c7c" stroke-width="4"/>
</g>
<circle cx="740.3" cy="334.3" r="6.3" fill="url(#gH)"/>
<circle cx="795.8" cy="375.0" r="13.2" fill="url(#gC)"/>
<circle cx="862.5" cy="345.8" r="6.3" fill="url(#gH)"/>
<circle cx="408.9" cy="595.7" r="9" fill="url(#lN)"/>
<circle cx="408.9" cy="619" r="9" fill="url(#lO)"/>
<circle cx="408.9" cy="642" r="9" fill="url(#lH)"/>
<circle cx="408.9" cy="665" r="9" fill="url(#lC)"/>
<g fill="#fff" font-family="Liberation Sans, sans-serif" font-size="12"><text x="419" y="600">N</text><text x="418.5" y="623">O</text><text x="419" y="646">H</text><text x="419" y="669">C</text></g>
</svg>
<div class="tip"><div style="top:2px;font-weight:bold">"N1"</div><div style="top:18px;letter-spacing:-0.53px">0.26073(17), 0.19146(9), 0.47167(12)</div><div style="top:33px;letter-spacing:-0.24px">&lt;&lt; m_ulExploreFlags = 00000003 &gt;&gt;</div><div style="top:48px">Central atom of bonding sphere: C.N.=3 [C3] (complete)</div></div>
</body></html>
